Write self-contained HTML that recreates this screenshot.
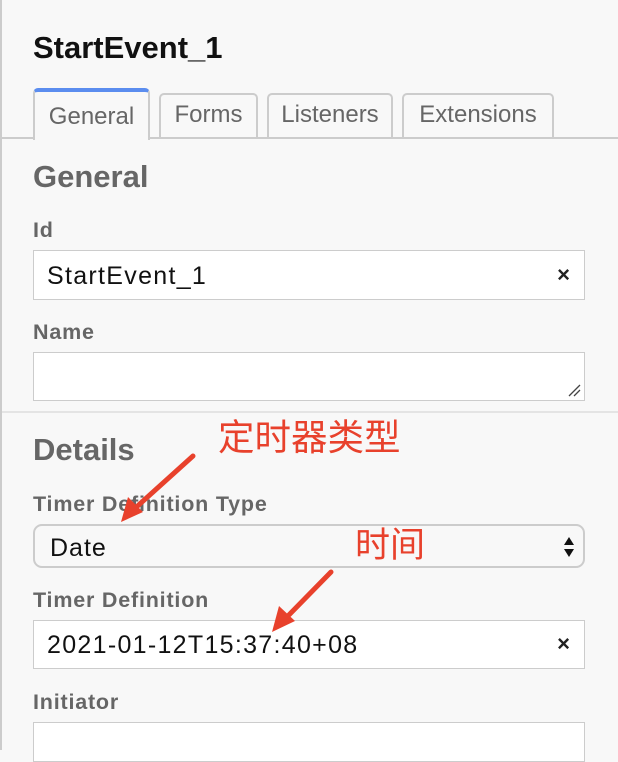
<!DOCTYPE html>
<html><head><style>
body{margin:0;width:618px;height:750px;overflow:hidden;background:#f8f8f8;font-family:"Liberation Sans",Arial,sans-serif;position:relative}
.a{position:absolute}
.lbl{position:absolute;left:33px;font-weight:bold;font-size:21.5px;letter-spacing:0.8px;color:#666}
.h{position:absolute;left:33px;font-weight:bold;font-size:31px;color:#666}
.inp{position:absolute;left:33px;width:552px;background:#fff;border:1px solid #ccc;box-sizing:border-box}
.tab{position:absolute;border:2px solid #ccc;border-bottom:none;border-radius:5px 5px 0 0;font-size:24px;color:#666;text-align:center;box-sizing:border-box;line-height:40px}
.x{position:absolute;right:14px;font-size:22px;font-weight:bold;color:#222}
.t{position:absolute;left:13px;font-size:25px;letter-spacing:1.3px;color:#111}
.cn{position:absolute;color:#e8412c;font-family:"Liberation Sans","Noto Sans CJK SC",sans-serif}
</style></head><body>
<div class="a" style="left:0;top:0;width:2px;height:750px;background:#ccc"></div>
<div class="a" style="left:33px;top:30px;font-size:31px;font-weight:bold;color:#111">StartEvent_1</div>
<div class="a" style="left:0;top:137px;width:618px;height:2px;background:#ccc"></div>
<div class="tab" style="left:33px;top:88px;width:117px;height:52px;background:#f8f8f8;border-top:4px solid #5b8def;line-height:50px">General</div>
<div class="tab" style="left:159px;top:93px;width:99px;height:45px">Forms</div>
<div class="tab" style="left:267px;top:93px;width:126px;height:45px">Listeners</div>
<div class="tab" style="left:402px;top:93px;width:152px;height:45px">Extensions</div>
<div class="h" style="top:159px">General</div>
<div class="lbl" style="top:218px">Id</div>
<div class="inp" style="top:250px;height:50px"><span class="t" style="top:11px">StartEvent_1</span><span class="x" style="top:11px">×</span></div>
<div class="lbl" style="top:320px">Name</div>
<div class="inp" style="top:352px;height:49px"><svg class="a" style="right:3px;bottom:3px" width="14" height="14"><path d="M2 13L13 2M7 13L13 7" stroke="#444" stroke-width="1.3"/></svg></div>
<div class="a" style="left:2px;top:411px;width:616px;height:2px;background:#e4e4e4"></div>
<div class="h" style="top:432px">Details</div>
<div class="lbl" style="top:492px">Timer Definition Type</div>
<div class="inp" style="top:524px;height:44px;border-radius:9px;border-color:#ccc;background:#f8f8f8;border-width:2px"><span class="a" style="left:15px;top:8px;font-size:25px;letter-spacing:1px;color:#111">Date</span><svg class="a" style="right:8px;top:10px" width="12" height="22"><path d="M1 9L6 1L11 9Z M1 13L6 21L11 13Z" fill="#111"/></svg></div>
<div class="lbl" style="top:588px">Timer Definition</div>
<div class="inp" style="top:620px;height:49px"><span class="t" style="top:10px">2021-01-12T15:37:40+08</span><span class="x" style="top:10px">×</span></div>
<div class="lbl" style="top:690px">Initiator</div>
<div class="inp" style="top:722px;height:40px"></div>
<div class="cn" style="left:218px;top:417px;font-size:36.5px;line-height:42px">定时器类型</div>
<div class="cn" style="left:355px;top:526px;font-size:35px;line-height:40px">时间</div>
<svg class="a" style="left:0;top:0" width="618" height="750">
<path d="M193 456L132 511" stroke="#e8412c" stroke-width="5" stroke-linecap="round"/>
<path d="M121 522L128 497L143 512Z" fill="#e8412c"/>
<path d="M331 572L283 621" stroke="#e8412c" stroke-width="5" stroke-linecap="round"/>
<path d="M272 632L279 606L295 621Z" fill="#e8412c"/>
</svg>
</body></html>
